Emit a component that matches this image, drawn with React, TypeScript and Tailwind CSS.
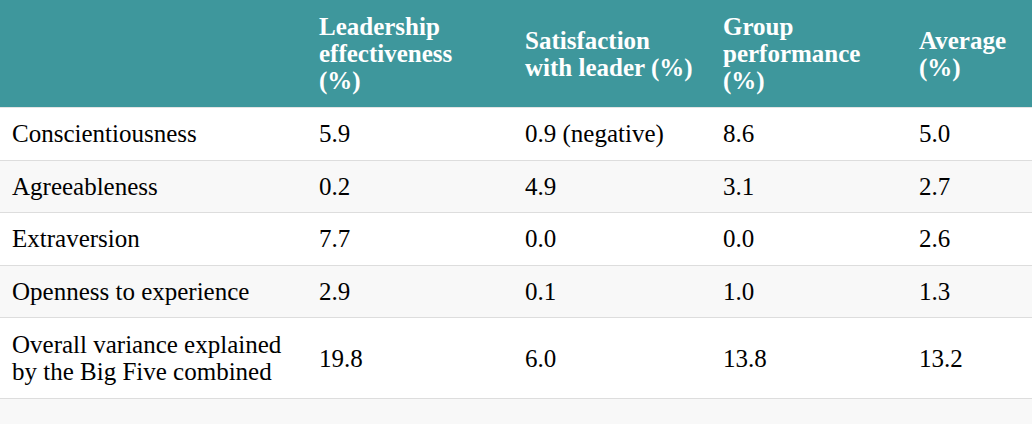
import React from "react";

const rows: string[][] = [
  ["Conscientiousness", "5.9", "0.9 (negative)", "8.6", "5.0"],
  ["Agreeableness", "0.2", "4.9", "3.1", "2.7"],
  ["Extraversion", "7.7", "0.0", "0.0", "2.6"],
  ["Openness to experience", "2.9", "0.1", "1.0", "1.3"],
  ["Overall variance explained by the Big Five combined", "19.8", "6.0", "13.8", "13.2"],
];

const headers = [
  "",
  "Leadership effectiveness (%)",
  "Satisfaction with leader (%)",
  "Group performance (%)",
  "Average (%)",
];

const cellFont = "font-['Liberation_Serif','Times_New_Roman',serif] text-[25px] leading-[27px]";

export default function App() {
  return (
    <div className="w-[1032px] h-[424px] bg-[#f8f8f8]">
      <table className={"w-[1032px] table-fixed border-collapse text-black " + cellFont}>
        <colgroup>
          <col className="w-[307px]" />
          <col className="w-[206px]" />
          <col className="w-[198px]" />
          <col className="w-[196px]" />
          <col className="w-[125px]" />
        </colgroup>
        <thead>
          <tr className="bg-[#3e979c] text-white border-b border-[#e4e4e4]">
            {headers.map((h, j) => (
              <th
                key={j}
                className={
                  (j === 1 ? "pl-3 pr-5" : "px-3") +
                  " py-[13px] text-left align-middle font-bold font-['Liberation_Serif','Times_New_Roman',serif] text-[25px] leading-[27px]"
                }
              >
                {h}
              </th>
            ))}
          </tr>
        </thead>
        <tbody>
          {rows.map((r, i) => (
            <tr
              key={i}
              className={(i % 2 === 1 ? "bg-[#f8f8f8]" : "bg-white") + " border-b border-[#dddddd]"}
            >
              {r.map((c, j) => (
                <td
                  key={j}
                  className={
                    (i === rows.length - 1 ? "py-[13px]" : "py-[12.25px]") +
                    " px-3 align-middle text-black font-['Liberation_Serif','Times_New_Roman',serif] text-[25px] leading-[27px]"
                  }
                >
                  {c}
                </td>
              ))}
            </tr>
          ))}
        </tbody>
      </table>
    </div>
  );
}
